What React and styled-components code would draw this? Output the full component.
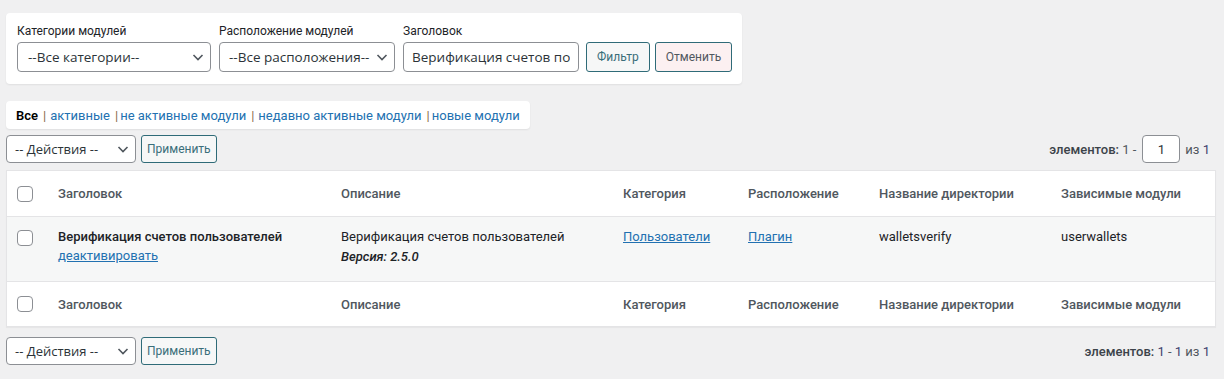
import React from 'react'
import styled, { createGlobalStyle } from 'styled-components'

const GlobalStyle = createGlobalStyle`
  body {
    margin: 0;
    background: #f0f0f1;
    font-family: Roboto, "Liberation Sans", sans-serif;
    color: #3c434a;
  }
`

const Page = styled.div`
  padding: 13px 8px 0 6px;
`

const Card = styled.div`
  background: #fff;
  border-radius: 4px;
  box-shadow: 0 1px 2px rgba(0, 0, 0, 0.07);
  display: flex;
  width: fit-content;
`

const FilterCard = styled(Card)`
  width: 736px;
  box-sizing: border-box;
  padding: 11px 11px 12px;
  align-items: flex-end;
  gap: 8px;
`

const Field = styled.div`
  display: flex;
  flex-direction: column;
  gap: 3px;
`

const Label = styled.label`
  font-size: 12px;
  color: #1d2327;
  line-height: 15px;
`

const SelectBox = styled.div`
  box-sizing: border-box;
  width: ${(p) => p.$w}px;
  height: ${(p) => p.$h || 30}px;
  border: 1px solid #8c8f94;
  border-radius: 4px;
  background: #fff;
  display: flex;
  align-items: center;
  justify-content: space-between;
  padding: 0 6px 0 ${(p) => p.$pl || 10}px;
  font-family: "Open Sans", "Liberation Sans", sans-serif;
  font-size: ${(p) => p.$fs || 13.5}px;
  color: #2c3338;
  white-space: nowrap;
  overflow: hidden;
  svg {
    flex: none;
    color: #50575e;
  }
`

const TextInput = styled.input`
  box-sizing: border-box;
  width: 176px;
  height: 30px;
  border: 1px solid #8c8f94;
  border-radius: 4px;
  background: #fff;
  padding: 0 8px;
  font-family: "Open Sans", "Liberation Sans", sans-serif;
  font-size: 13.5px;
  color: #2c3338;
  outline: none;
`

const Button = styled.button`
  box-sizing: border-box;
  height: ${(p) => p.$h || 30}px;
  padding: 0 ${(p) => p.$px || 10}px;
  border: 1px solid #2f6b78;
  border-radius: 3px;
  background: ${(p) => (p.$danger ? '#fcf0f1' : '#f6f7f7')};
  color: ${(p) => (p.$danger ? '#50575e' : '#3a6e7a')};
  font-family: Roboto, "Liberation Sans", sans-serif;
  font-size: 12px;
  margin-left: ${(p) => p.$ml || 0}px;
  cursor: pointer;
`

const SubNav = styled(Card)`
  margin-top: 17px;
  height: 28px;
  align-items: center;
  padding: 0 10px;
  font-size: 13px;
`

const Current = styled.span`
  color: #000;
  font-weight: 600;
`

const NavLink = styled.a`
  color: #2271b1;
  text-decoration: none;
`

const Sep = styled.span`
  color: #8a6a4a;
  margin: 0 ${(p) => p.$r || 4}px 0 ${(p) => p.$l || 5}px;
`

const Actions = styled.div`
  display: flex;
  align-items: center;
  justify-content: space-between;
  margin-top: ${(p) => p.$mt}px;
`

const Group = styled.div`
  display: flex;
  align-items: center;
  gap: 5px;
`

const Pager = styled.div`
  display: flex;
  align-items: center;
  font-size: 13px;
  color: #50575e;
  margin-right: 6px;
  b {
    font-weight: 500;
    color: #3c434a;
  }
`

const Num = styled.span`
  color: #3c3f6e;
`

const PageInput = styled.div`
  box-sizing: border-box;
  width: 38px;
  height: 28px;
  border: 1px solid #8c8f94;
  border-radius: 4px;
  background: #fff;
  display: flex;
  align-items: center;
  justify-content: center;
  margin: 0 5px 0 6px;
  color: #2c3338;
`

const Table = styled.div`
  margin-top: 7px;
  background: #fff;
  border: 1px solid #e4e4e6;
  box-shadow: 0 1px 1px rgba(0, 0, 0, 0.04);
`

const Row = styled.div`
  display: grid;
  grid-template-columns: 51px 283px 282px 125px 131px 182px 1fr;
  height: ${(p) => p.$h}px;
  background: ${(p) => (p.$alt ? '#f6f7f7' : '#fff')};
  border-top: ${(p) => (p.$divider ? '1px solid #e4e4e6' : 'none')};
  align-items: ${(p) => (p.$top ? 'start' : 'center')};
  padding-top: ${(p) => (p.$top ? 10 : 0)}px;
  box-sizing: border-box;
  font-size: 13px;
`

const Head = styled.div`
  font-weight: 500;
  color: #50575e;
`

const Check = styled.span`
  display: block;
  width: 14px;
  height: 14px;
  border: 1px solid #8c8f94;
  border-radius: 4px;
  background: #fff;
  margin-left: 10px;
  margin-top: ${(p) => (p.$top ? 3 : 0)}px;
`

const Cell = styled.div`
  color: #1d2327;
  line-height: 19px;
`

const Title = styled.div`
  font-weight: 500;
  color: #1d2327;
`

const ULink = styled.a`
  color: #2271b1;
  text-decoration: underline;
`

const Version = styled.div`
  font-style: italic;
  font-weight: 500;
  font-size: 13px;
  margin-top: 1px;
`

const Chevron = () => (
  <svg width="12" height="12" viewBox="0 0 12 12" fill="none">
    <path d="M1.5 4 L6 8.5 L10.5 4" stroke="currentColor" strokeWidth="1.6" />
  </svg>
)

const HeadRow = ({ divider }) => (
  <Row $h={45} $divider={divider}>
    <Check />
    <Head>Заголовок</Head>
    <Head>Описание</Head>
    <Head>Категория</Head>
    <Head>Расположение</Head>
    <Head>Название директории</Head>
    <Head>Зависимые модули</Head>
  </Row>
)

const ActionsLeft = () => (
  <Group>
    <SelectBox $w={130} $h={28} $pl={8} $fs={13}>
      -- Действия --
      <Chevron />
    </SelectBox>
    <Button $h={28} $px={5}>Применить</Button>
  </Group>
)

export default function App() {
  return (
    <>
      <GlobalStyle />
      <Page>
        <FilterCard>
          <Field>
            <Label>Категории модулей</Label>
            <SelectBox $w={194}>
              --Все категории--
              <Chevron />
            </SelectBox>
          </Field>
          <Field>
            <Label>Расположение модулей</Label>
            <SelectBox $w={176} $pl={9}>
              --Все расположения--
              <Chevron />
            </SelectBox>
          </Field>
          <Field>
            <Label>Заголовок</Label>
            <TextInput readOnly value="Верификация счетов пользователей" />
          </Field>
          <Button $px={10} $ml={-1}>Фильтр</Button>
          <Button $danger $ml={-3}>Отменить</Button>
        </FilterCard>
        <SubNav>
          <Current>Все</Current>
          <Sep>|</Sep>
          <NavLink>активные</NavLink>
          <Sep $r={2}>|</Sep>
          <NavLink>не активные модули</NavLink>
          <Sep>|</Sep>
          <NavLink>недавно активные модули</NavLink>
          <Sep $r={2}>|</Sep>
          <NavLink>новые модули</NavLink>
        </SubNav>
        <Actions $mt={6}>
          <ActionsLeft />
          <Pager>
            <b>элементов:</b>&nbsp;1 -
            <PageInput>1</PageInput>
            из&nbsp;<Num>1</Num>
          </Pager>
        </Actions>
        <Table>
          <HeadRow />
          <Row $h={65} $alt $divider $top>
            <Check $top />
            <Cell>
              <Title>Верификация счетов пользователей</Title>
              <ULink>деактивировать</ULink>
            </Cell>
            <Cell>
              Верификация счетов пользователей
              <Version>Версия: 2.5.0</Version>
            </Cell>
            <Cell>
              <ULink>Пользователи</ULink>
            </Cell>
            <Cell>
              <ULink>Плагин</ULink>
            </Cell>
            <Cell>walletsverify</Cell>
            <Cell>userwallets</Cell>
          </Row>
          <HeadRow divider />
        </Table>
        <Actions $mt={10}>
          <ActionsLeft />
          <Pager>
            <b>элементов:</b>&nbsp;<Num>1</Num>&nbsp;-&nbsp;<Num>1</Num>&nbsp;из&nbsp;<Num>1</Num>
          </Pager>
        </Actions>
      </Page>
    </>
  )
}
